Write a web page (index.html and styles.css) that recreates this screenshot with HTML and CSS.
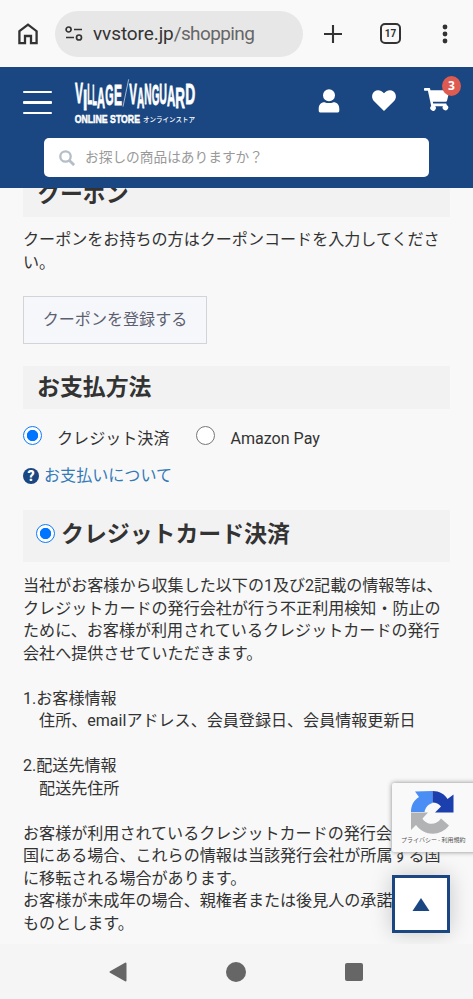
FILE: index.html
```
<!DOCTYPE html>
<html lang="ja">
<head>
<meta charset="utf-8">
<title>VILLAGE VANGUARD ONLINE STORE</title>
<link rel="stylesheet" href="styles.css">
</head>
<body>
<div class="browser">
  <svg class="home" width="20" height="22" viewBox="0 0 20 22"><path d="M1.4 8.2 10 1.7l8.600 6.500V20.200H13V13H7v7.200H1.400z" fill="none" stroke="#333" stroke-width="2.300"/></svg>
  <div class="address">
    <svg class="tune" width="18" height="16" viewBox="0 0 18 16" fill="none" stroke="#333" stroke-width="1.700"><circle cx="3.600" cy="3.500" r="2.500"/><path d="M9 3.500h8M1 11.500h8"/><circle cx="14" cy="11.500" r="2.500"/></svg>
    <span class="url">vvstore.jp<span class="path">/shopping</span></span>
  </div>
  <svg class="plus" width="18" height="18" viewBox="0 0 18 18"><path d="M9 0v18M0 9h18" stroke="#333" stroke-width="2.100"/></svg>
  <div class="tabs">17</div>
  <svg class="dots" width="6" height="20" viewBox="0 0 6 20" fill="#333"><circle cx="3" cy="3" r="2.400"/><circle cx="3" cy="10" r="2.400"/><circle cx="3" cy="17" r="2.400"/></svg>
</div>
<header class="header">
  <div class="header-row">
    <div class="menu"><i></i><i></i><i></i></div>
    <svg class="logo" width="130" height="52" viewBox="0 0 390 156" fill="#fff">
      <g class="logo-letters">
        <text x="15" y="81" textLength="24" lengthAdjust="spacingAndGlyphs">V</text>
        <text x="39" y="101" textLength="13" lengthAdjust="spacingAndGlyphs">I</text>
        <text x="52" y="85" textLength="15" lengthAdjust="spacingAndGlyphs">L</text>
        <text x="67" y="88" textLength="14" lengthAdjust="spacingAndGlyphs">L</text>
        <text x="81" y="96" textLength="24" lengthAdjust="spacingAndGlyphs">A</text>
        <text x="106" y="87" textLength="25" lengthAdjust="spacingAndGlyphs">G</text>
        <text x="132" y="87" textLength="24" lengthAdjust="spacingAndGlyphs">E</text>
        <text x="178" y="85" textLength="23" lengthAdjust="spacingAndGlyphs">V</text>
        <text x="201" y="96" textLength="22" lengthAdjust="spacingAndGlyphs">A</text>
        <text x="223" y="85" textLength="22" lengthAdjust="spacingAndGlyphs">N</text>
        <text x="245" y="87" textLength="23" lengthAdjust="spacingAndGlyphs">G</text>
        <text x="268" y="83" textLength="23" lengthAdjust="spacingAndGlyphs">U</text>
        <text x="291" y="89" textLength="25" lengthAdjust="spacingAndGlyphs">A</text>
        <text x="316" y="97" textLength="29" lengthAdjust="spacingAndGlyphs">R</text>
        <text x="346" y="84" textLength="30" lengthAdjust="spacingAndGlyphs">D</text>
      </g>
      <path d="M176 10 159 92" stroke="#fff" stroke-width="1.800"/>
      <text class="logo-sub" x="14" y="142" textLength="196" lengthAdjust="spacingAndGlyphs">ONLINE STORE</text>
      <text class="logo-kana" x="219" y="138" textLength="156" lengthAdjust="spacingAndGlyphs">オンラインストア</text>
    </svg>
    <svg class="user" width="22" height="24" viewBox="0 0 22 24" fill="#fff"><circle cx="11" cy="6.200" r="6"/><path d="M.7 20c0-4.500 2.300-6.800 5.800-6.800 2.800 1.200 6.200 1.200 9 0 3.500 0 5.800 2.300 5.800 6.800v1.400c0 1.400-.8 2-2 2H2.700c-1.200 0-2-.6-2-2z"/></svg>
    <svg class="heart" width="24" height="21" viewBox="0 0 24 21" fill="#fff"><path d="M12 20.900 1.900 11C-.8 8.100-.3 3.700 2.400 1.500 5.200-.7 9-.1 12 3.200 15-.1 18.800-.7 21.600 1.500c2.700 2.200 3.200 6.600.5 9.500z"/></svg>
    <div class="cart">
      <svg width="26" height="23" viewBox="0 0 26 23" fill="#fff"><path d="M1 0h4c.7 0 1 .4 1.200 1l.2 1.300H24c1 0 1.500.6 1.200 1.500l-2.200 9c-.2.700-.6 1-1.300 1H8.800l.4 1.600h12.400c.8 0 1.200.8 1 1.600A2.800 2.800 0 1 1 19 18.200h-7.800a2.800 2.800 0 1 1-4-.3L3.900 2.800H1C.3 2.800 0 2.300 0 1.400S.3 0 1 0z"/></svg>
      <span class="badge">3</span>
    </div>
  </div>
  <div class="search">
    <svg width="16" height="16" viewBox="0 0 16 16" fill="none" stroke="#b5bdc9" stroke-width="2.300"><circle cx="6.500" cy="6.500" r="5.200"/><path d="m10.200 10.200 4.900 4.900" stroke-width="2.800"/></svg>
    <span>お探しの商品はありますか？</span>
  </div>
</header>
<main class="content">
  <h2 class="bar">クーポン</h2>
  <p class="coupon-text">クーポンをお持ちの方はクーポンコードを入力してください。</p>
  <button class="coupon-btn">クーポンを登録する</button>
  <h2 class="bar">お支払方法</h2>
  <div class="options">
    <i class="radio on"></i><span class="first">クレジット決済</span>
    <i class="radio"></i><span>Amazon Pay</span>
  </div>
  <a class="about"><b class="q">?</b>お支払いについて</a>
  <h2 class="bar card-bar"><i class="radio on"></i>クレジットカード決済</h2>
  <p class="terms">当社がお客様から収集した以下の1及び2記載の情報等は、<br>クレジットカードの発行会社が行う不正利用検知・防止の<br>ために、お客様が利用されているクレジットカードの発行<br>会社へ提供させていただきます。<br><br>1.お客様情報<br>　住所、emailアドレス、会員登録日、会員情報更新日<br><br>2.配送先情報<br>　配送先住所<br><br>お客様が利用されているクレジットカードの発行会社が外<br>国にある場合、これらの情報は当該発行会社が所属する国<br>に移転される場合があります。<br>お客様が未成年の場合、親権者または後見人の承諾を得た<br>ものとします。</p>
  <div class="captcha">
    <svg width="44" height="43" viewBox="0 0 44 43"><path d="M21.500 0v12c-4 1-7 4-8 9H0C0 14 3 9 8 6L4 .5z" fill="#4a8df5"/><path d="M21.500 0c7 0 12 3 15 8l6-4.500v18H24l6-6c-2-2.500-5-4-8.500-4z" fill="#1c3fae"/><path d="M0 21.500h17l-5.500 6c3 6 13 8 18.500 0l8 7C29 46 13 45 5 34l-5 5z" fill="#b2b3b5"/></svg>
    <span>プライバシー - 利用規約</span>
  </div>
  <div class="to-top"><svg width="18" height="13" viewBox="0 0 18 13"><path d="M9 0 17.500 13H.5z" fill="#1a4782"/></svg></div>
</main>
<nav class="navbar">
  <svg width="18" height="20" viewBox="0 0 18 20"><path d="M16.500 1.500v17L1.500 10z" fill="#666" stroke="#666" stroke-width="2" stroke-linejoin="round"/></svg>
  <i class="nav-home"></i>
  <i class="nav-recent"></i>
</nav>
</body>
</html>
```
FILE: styles.css
```
* { box-sizing: border-box; }
body {
  margin: 0;
  width: 473px;
  height: 999px;
  overflow: hidden;
  display: flex;
  flex-direction: column;
  background: #f8f8f8;
  color: #333;
  font-family: Roboto, "Noto Sans CJK JP", sans-serif;
  font-size: 16.07px;
  line-height: 22.5px;
}
svg { display: block; flex: none; }
.browser {
  height: 67px;
  flex: none;
  display: flex;
  align-items: center;
  padding-left: 18px;
  background: #f9f9f9;
}
.address {
  display: flex;
  align-items: center;
  width: 248px;
  height: 46px;
  margin-left: 17px;
  padding-left: 10px;
  border-radius: 23px;
  background: #e7e7e7;
}
.url {
  margin-left: 10px;
  padding-top: 2px;
  font-size: 19px;
  letter-spacing: -.1px;
  color: #333;
}
.path { color: #666; letter-spacing: -.6px; }
.plus { margin-left: 21px; }
.tabs {
  width: 21px;
  height: 21px;
  margin-left: 38px;
  border: 2px solid #333;
  border-radius: 5px;
  font-size: 10px;
  font-weight: 700;
  line-height: 17px;
  text-align: center;
}
.dots { margin-left: 41px; }
.header {
  height: 121px;
  flex: none;
  background: #1a4782;
  position: relative;
  z-index: 1;
}
.header-row {
  display: flex;
  align-items: flex-start;
  height: 71px;
  padding-left: 23px;
}
.menu {
  display: flex;
  flex-direction: column;
  gap: 8px;
  width: 29px;
  margin-top: 24px;
}
.menu i { height: 2.300px; background: #fff; border-radius: 1px; }
.logo { margin: 9px 0 0 18px; }
.logo-letters { font: 700 88px "Liberation Sans", sans-serif; stroke: #fff; stroke-width: 2.500px; }
.logo-sub { font: 700 33px "Liberation Sans", sans-serif; stroke: #fff; stroke-width: 1.500px; }
.logo-kana { font: 500 20px "Noto Sans CJK JP", sans-serif; }
.user { margin: 22px 0 0 118px; }
.heart { margin: 23px 0 0 32px; }
.cart { position: relative; margin: 21px 0 0 28px; }
.badge {
  position: absolute;
  left: 18px;
  top: -12px;
  width: 19px;
  height: 20px;
  border-radius: 50%;
  background: #dd5b50;
  color: #fff;
  font: 700 12px/20px "Open Sans", sans-serif;
  text-align: center;
}
.search {
  display: flex;
  align-items: center;
  gap: 10px;
  width: 385px;
  height: 39px;
  margin-left: 44px;
  padding-left: 15px;
  border-radius: 5px;
  background: #fff;
  color: #999;
  font-size: 13.700px;
}
.content {
  position: relative;
  height: 756px;
  flex: none;
  overflow: hidden;
  padding: 0 23px;
}
.bar {
  height: 43px;
  margin: 0;
  padding-left: 14px;
  background: #f2f2f2;
  font-size: 22.900px;
  line-height: 44px;
  font-weight: 700;
}
.bar:first-child { margin-top: -14px; line-height: 42px; }
.coupon-text { margin: 12px 0 22px; width: 420px; }
.coupon-btn {
  display: block;
  width: 184px;
  height: 48px;
  margin-bottom: 22px;
  padding: 0;
  border: 1px solid #d2d5d7;
  background: #f5f7fa;
  color: #5d5f70;
  font: inherit;
}
.options {
  display: flex;
  align-items: center;
  height: 22px;
  margin-top: 18px;
}
.options span { margin-left: 15px; position: relative; top: 1px; }
.options .first { margin-right: 27px; }
.radio {
  flex: none;
  width: 19px;
  height: 19px;
  margin-top: -5px;
  border: 1px solid #777;
  border-radius: 50%;
  background: #fff;
}
.radio.on {
  border-color: #0b7bff;
  background: radial-gradient(circle, #0075ff 5.300px, #fff 6px);
}
.about {
  display: flex;
  align-items: center;
  height: 22px;
  margin-top: 16px;
  color: #337ab7;
}
.q {
  width: 16px;
  height: 16px;
  margin-right: 5px;
  border-radius: 50%;
  background: #1a4782;
  color: #fff;
  font: 900 14px/16px Roboto, sans-serif;
  text-align: center;
}
.card-bar {
  display: flex;
  align-items: center;
  gap: 6px;
  height: 52px;
  margin-top: 23px;
  padding-left: 13px;
  padding-bottom: 2px;
}
.card-bar .radio { margin-top: -3px; }
.terms { margin: 13px 0 0; white-space: nowrap; }
.captcha {
  position: absolute;
  left: 392px;
  top: 595px;
  width: 90px;
  height: 69px;
  padding-top: 8px;
  border-radius: 2px;
  background: #f9f9f9;
  box-shadow: 0 0 5px #888;
}
.captcha svg { margin-left: 19px; }
.captcha span {
  display: block;
  margin-left: 9px;
  font-size: 6px;
  line-height: 11px;
  white-space: nowrap;
  color: #555;
}
.to-top {
  position: absolute;
  left: 392px;
  top: 687px;
  width: 58px;
  height: 58px;
  display: flex;
  align-items: center;
  justify-content: center;
  border: 3px solid #1a4782;
  background: #fff;
  box-shadow: 0 0 22px rgba(0, 0, 0, .2);
}
.navbar {
  height: 55px;
  flex: none;
  display: flex;
  align-items: center;
  padding-left: 109px;
  background: #f5f5f5;
}
.nav-home { width: 20px; height: 20px; margin-left: 99px; border-radius: 50%; background: #666; }
.nav-recent { width: 18px; height: 18px; margin-left: 99px; border-radius: 2px; background: #666; }
```
